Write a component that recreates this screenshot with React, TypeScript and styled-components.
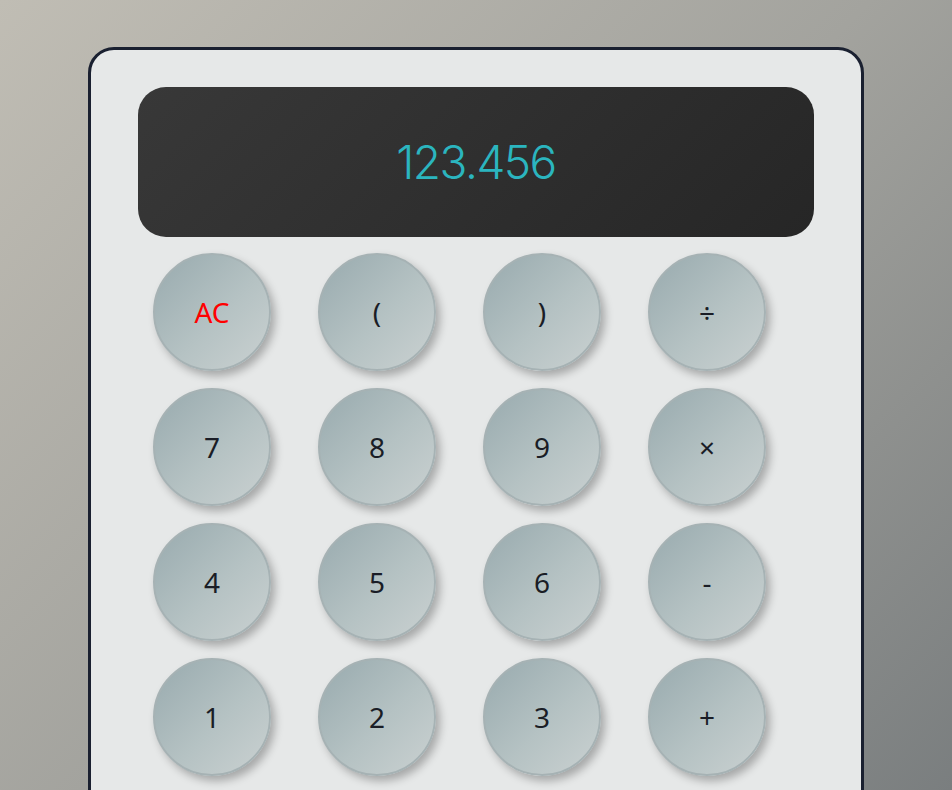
import React from "react";
import styled, { createGlobalStyle } from "styled-components";

const Global = createGlobalStyle`
  html, body { margin: 0; padding: 0; }
  body {
    min-height: 790px;
    background: linear-gradient(135deg, #c0bdb4 0%, #a3a39e 50%, #7a7e7f 100%);
    background-attachment: fixed;
    font-family: "Noto Sans", "Open Sans", sans-serif;
    overflow: hidden;
  }
`;

const Page = styled.div`
  height: 790px;
  display: flex;
  justify-content: center;
  align-items: flex-start;
  padding-top: 47px;
  box-sizing: border-box;
  overflow: hidden;
`;

const Card = styled.div`
  width: 776px;
  box-sizing: border-box;
  background: #e6e8e8;
  border: 3px solid #1a2030;
  border-radius: 26px;
  padding: 37px 47px 60px;
  display: flex;
  flex-direction: column;
  gap: 16px;
`;

const Display = styled.div`
  height: 150px;
  border-radius: 28px;
  background: linear-gradient(135deg, #383838 0%, #262626 100%);
  display: flex;
  align-items: center;
  justify-content: center;
  color: #2bb5bf;
  font-family: "Inter", "Noto Sans", sans-serif;
  font-size: 46px;
  font-weight: 300;
  letter-spacing: -1.5px;
`;

const Grid = styled.div`
  display: grid;
  grid-template-columns: repeat(4, 118px);
  column-gap: 47px;
  row-gap: 17px;
  padding-left: 15px;
`;

const Key = styled.button<{ $red?: boolean }>`
  width: 118px;
  height: 118px;
  border-radius: 50%;
  border: 2px solid #a6b2b4;
  background: linear-gradient(135deg, #98aaae 0%, #b5c2c3 55%, #cad1d1 100%);
  box-shadow: 4px 5px 8px rgba(0, 0, 0, 0.28);
  display: flex;
  align-items: center;
  justify-content: center;
  font-family: "Noto Sans", "Open Sans", sans-serif;
  font-size: 28px;
  color: ${(p) => (p.$red ? "#ff0000" : "#1a1d26")};
  padding: 0;
  cursor: pointer;
`;

const keys = ["AC", "(", ")", "÷", "7", "8", "9", "×", "4", "5", "6", "-", "1", "2", "3", "+"];

export default function App() {
  return (
    <>
      <Global />
      <Page>
        <Card>
          <Display>123.456</Display>
          <Grid>
            {keys.map((k) => (
              <Key key={k} $red={k === "AC"}>
                {k}
              </Key>
            ))}
          </Grid>
        </Card>
      </Page>
    </>
  );
}
